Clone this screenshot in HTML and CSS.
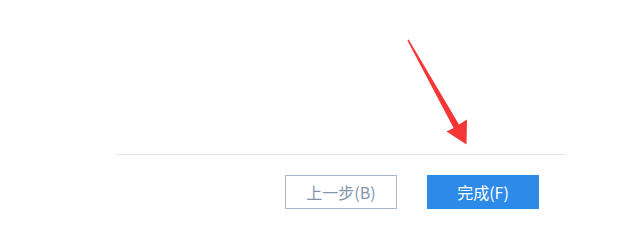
FILE: index.html
```html
<!DOCTYPE html>
<html lang="zh">
<head>
<meta charset="utf-8">
<link rel="stylesheet" href="styles.css">
</head>
<body>
<div class="page">
  <svg class="arrow" width="622" height="243" viewBox="0 0 622 243">
    <polygon points="408.6,39.6 459,124.5 467,119.5 466.5,144.5 446.5,131.5 453.6,128 407.4,40.4" fill="#f53636"/>
  </svg>
  <div class="footer">
    <div class="actions">
      <button class="btn btn-prev">上一步(B)</button>
      <button class="btn btn-done">完成(F)</button>
    </div>
  </div>
</div>
</body>
</html>
```
FILE: styles.css
```css
html, body {
  margin: 0;
  padding: 0;
  background: #fff;
}
.page {
  position: relative;
  width: 622px;
  height: 243px;
  padding-top: 154px;
  box-sizing: border-box;
  font-family: "Noto Sans CJK SC", "Liberation Sans", sans-serif;
}
.arrow {
  position: absolute;
  left: 0;
  top: 0;
}
.footer {
  margin-left: 116px;
  width: 449px;
  border-top: 1px solid #e6e6e6;
}
.actions {
  display: flex;
  justify-content: flex-end;
  gap: 30px;
  padding: 20px 26px 0 0;
}
.btn {
  width: 112px;
  height: 34px;
  box-sizing: border-box;
  font-family: inherit;
  font-size: 16px;
  padding: 0;
  border-radius: 0;
  letter-spacing: 0;
}
.btn-prev {
  background: #fff;
  border: 1px solid #a9b8d0;
  color: #8494ad;
}
.btn-done {
  background: #2d8ae8;
  border: 1px solid #2d8ae8;
  color: #fff;
}
```
